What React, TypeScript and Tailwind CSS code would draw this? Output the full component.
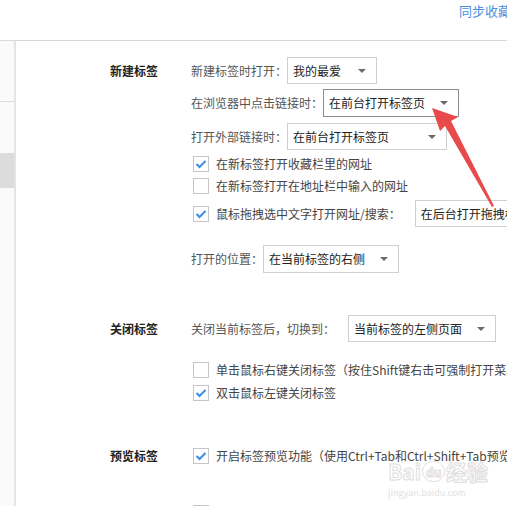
import React from "react"

function Arrow() {
  return (
    <svg width="8" height="4" viewBox="0 0 8 4" className="shrink-0">
      <polygon points="0,0 8,0 4,4" fill="#6b6b6b" />
    </svg>
  )
}

function Select({ text, width, height = 27, dark = false }: { text: string; width: string; height?: number; dark?: boolean }) {
  return (
    <div
      className={`${width} ${height === 28 ? "h-[28px]" : "h-[27px]"} shrink-0 flex items-center justify-between pl-[5px] pr-[10px] bg-white border ${
        dark ? "border-[#8c8c8c]" : "border-[#cfcfcf]"
      } text-[12px] text-[#222] whitespace-nowrap overflow-hidden`}
    >
      <span className="leading-none">{text}</span>
      <Arrow />
    </div>
  )
}

function Checkbox({ checked }: { checked: boolean }) {
  return (
    <div className="w-[16px] h-[16px] ml-[2px] mr-[7px] shrink-0 border border-[#c6c6c6] bg-white flex items-center justify-center">
      {checked && (
        <svg width="14" height="14" viewBox="0 0 14 14">
          <polyline points="2.5,7 5.5,10 11.5,4" fill="none" stroke="#3a8ee6" strokeWidth="2" />
        </svg>
      )}
    </div>
  )
}

function CheckRow({ checked, text, h = "h-[22px]", children }: { checked: boolean; text: string; h?: string; children?: React.ReactNode }) {
  return (
    <div className={`${h} flex items-center whitespace-nowrap`}>
      <Checkbox checked={checked} />
      <span className="text-[12px] leading-none text-[#444]">{text}</span>
      {children}
    </div>
  )
}

function Label({ text }: { text: string }) {
  return <span className="text-[12px] leading-none text-[#555] whitespace-nowrap">{text}</span>
}

export default function App() {
  return (
    <div className="relative w-[507px] h-[506px] overflow-hidden bg-white font-['Noto_Sans_CJK_SC',sans-serif]">
      {/* header */}
      <div className="h-[41px] border-b border-[#d9d9d9] pl-[459px] pt-[4px] whitespace-nowrap text-[13px] leading-none text-[#4a90e2]">
        同步收藏
      </div>

      <div className="flex h-[465px]">
        {/* sidebar */}
        <div className="w-[16px] shrink-0 bg-[#fafafa] border-r-2 border-[#e4e4e4] flex flex-col">
          <div className="h-[61px] border-b border-[#dedede]" />
          <div className="h-[51px]" />
          <div className="h-[35px] bg-[#dcdcdc]" />
        </div>

        {/* main */}
        <div className="flex-1 pl-[94px] pt-[16px]">
          {/* 新建标签 */}
          <div className="flex">
            <div className="w-[81px] h-[27px] shrink-0 flex items-center text-[12px] font-bold text-[#222]">新建标签</div>
            <div className="flex flex-col">
              <div className="h-[27px] flex items-center">
                <Label text="新建标签时打开：" />
                <Select text="我的最爱" width="w-[90px]" />
              </div>
              <div className="h-[28px] mt-[5px] flex items-center">
                <Label text="在浏览器中点击链接时：" />
                <Select text="在前台打开标签页" width="w-[136px]" height={28} dark />
              </div>
              <div className="h-[27px] mt-[6px] flex items-center">
                <Label text="打开外部链接时：" />
                <Select text="在前台打开标签页" width="w-[160px]" />
              </div>
              <div className="mt-[3px]">
                <CheckRow checked text="在新标签打开收藏栏里的网址" />
                <CheckRow checked={false} text="在新标签打开在地址栏中输入的网址" />
              </div>
              <CheckRow checked text="鼠标拖拽选中文字打开网址/搜索：" h="h-[27px] mt-[3px]">
                <div className="ml-[14px]">
                  <Select text="在后台打开拖拽标签页" width="w-[150px]" />
                </div>
              </CheckRow>
              <div className="h-[28px] mt-[18px] flex items-center">
                <Label text="打开的位置：" />
                <Select text="在当前标签的右侧" width="w-[136px]" height={28} />
              </div>
            </div>
          </div>

          {/* 关闭标签 */}
          <div className="flex mt-[42px]">
            <div className="w-[81px] h-[27px] shrink-0 flex items-center text-[12px] font-bold text-[#222]">关闭标签</div>
            <div className="flex flex-col">
              <div className="h-[27px] flex items-center">
                <Label text="关闭当前标签后，切换到：" />
                <div className="ml-[13px]">
                  <Select text="当前标签的左侧页面" width="w-[148px]" />
                </div>
              </div>
              <div className="mt-[16px]">
                <CheckRow checked={false} text="单击鼠标右键关闭标签（按住Shift键右击可强制打开菜单）" h="h-[23px]" />
                <CheckRow checked text="双击鼠标左键关闭标签" h="h-[23px]" />
              </div>
            </div>
          </div>

          {/* 预览标签 */}
          <div className="flex mt-[41px]">
            <div className="w-[81px] h-[22px] shrink-0 flex items-center text-[12px] font-bold text-[#222]">预览标签</div>
            <div className="flex flex-col">
              <CheckRow checked text="开启标签预览功能（使用Ctrl+Tab和Ctrl+Shift+Tab预览标签）" />
              <div className="mt-[35px]">
                <CheckRow checked={false} text="" />
              </div>
            </div>
          </div>
        </div>
      </div>

      {/* watermark */}
      <div className="absolute left-[388px] top-[461px] pointer-events-none flex flex-col opacity-80">
        <div className="flex items-center text-[21px] leading-none font-bold text-white [-webkit-text-stroke:1px_#d6d6d6] whitespace-nowrap">
          <span>Bai</span>
          <span className="mx-[1px] w-[23px] h-[21px] rounded-full border border-[#d6d6d6] flex items-center justify-center text-[12px]">du</span>
          <span>经验</span>
        </div>
        <span className="mt-[6px] text-[9px] leading-none text-[#dadada] whitespace-nowrap">jingyan.baidu.com</span>
      </div>

      {/* red arrow */}
      <svg className="absolute left-0 top-0 pointer-events-none" width="507" height="506" viewBox="0 0 507 506">
        <polygon
          points="432,108 458,117 451,121 494,206 492,207 445,126 440,131"
          fill="#e8494b"
        />
      </svg>
    </div>
  )
}
